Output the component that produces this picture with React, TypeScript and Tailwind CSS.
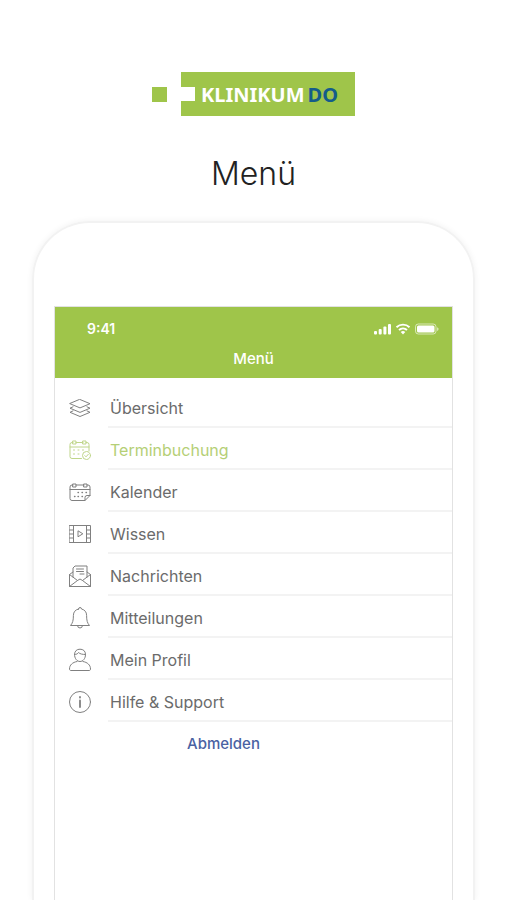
import type { ReactNode } from "react";

type Item = { label: string; icon: ReactNode; active?: boolean };

function Icon({ children }: { children: ReactNode }) {
  return (
    <svg
      viewBox="0 0 24 24"
      className="size-6 shrink-0 opacity-85"
      fill="none"
      stroke="currentColor"
      strokeWidth="1"
      strokeLinecap="round"
      strokeLinejoin="round"
      aria-hidden="true"
    >
      {children}
    </svg>
  );
}

const items: Item[] = [
  {
    label: "Übersicht",
    icon: (
      <Icon>
        <path d="M12 3.500 22 7.700 12 11.900 2 7.700Z" />
        <path d="M5 10.800 2 12.200 12 16.400l10-4.200L19 10.800" />
        <path d="M5 14.900 2 16.300 12 20.500l10-4.200L19 14.900" />
      </Icon>
    ),
  },
  {
    label: "Terminbuchung",
    active: true,
    icon: (
      <Icon>
        <path d="M13.500 20.500H4a2 2 0 0 1-2-2V6.500a2 2 0 0 1 2-2h1M8 4.500h7M18 4.500h1a2 2 0 0 1 2 2V13M2 9h19" />
        <path d="M5 3h3v3H5zM15 3h3v3h-3z" />
        <path d="M5.500 12h1M10 12h1M14.500 12h1M5.500 16h1M10 16h1" />
        <circle cx="18.500" cy="17.500" r="4" />
        <path d="m16.800 17.600 1.200 1.200 2.300-2.500" />
      </Icon>
    ),
  },
  {
    label: "Kalender",
    icon: (
      <Icon>
        <path d="M5 5H4a2 2 0 0 0-2 2v11.500a2 2 0 0 0 2 2h13l5-5V7a2 2 0 0 0-2-2h-1M8 5h8M2 9.500h20" />
        <path d="M5 4h3v3H5zM16 4h3v3h-3z" />
        <path d="M17 20.500v-3a2 2 0 0 1 2-2h3" />
        <path d="M10 12.500h.500M14 12.500h.500M18 12.500h.500M6.500 16.500h.500M10 16.500h.500M14 16.500h.500" strokeWidth="1.300" />
      </Icon>
    ),
  },
  {
    label: "Wissen",
    icon: (
      <Icon>
        <path d="M1.500 3.500h21v17h-21zM5.500 3.500v17M18.500 3.500v17" />
        <path d="M1.500 8h4M1.500 12h4M1.500 16h4M18.500 8h4M18.500 12h4M18.500 16h4" />
        <path d="M10 9.200v5.600l4.500-2.800Z" />
      </Icon>
    ),
  },
  {
    label: "Nachrichten",
    icon: (
      <Icon>
        <path d="M5 8 1.500 10.500v12h21v-12L19 8" />
        <path d="M5 13V4l2-2h12v11" />
        <path d="m1.500 10.500 8 6M22.500 10.500l-8 6M1.500 22.500l8-6L12 15l2.500 1.500 8 6" />
        <path d="M8.500 5h7M8.500 7.500h7M12 10h4" />
      </Icon>
    ),
  },
  {
    label: "Mitteilungen",
    icon: (
      <Icon>
        <path d="M10.500 3a1.500 1.500 0 0 1 3 0c3.300.800 5.100 3 5.100 6.500 0 5 .700 7.500 2.900 10h-19c2.200-2.500 2.900-5 2.900-10 0-3.500 1.800-5.700 5.100-6.500Z" />
        <path d="M9.500 19.500a2.500 2.500 0 0 0 5 0" />
      </Icon>
    ),
  },
  {
    label: "Mein Profil",
    icon: (
      <Icon>
        <path d="M6.500 6.500C6.500 3 8.800 1.200 12 1.200s5.500 1.800 5.500 5.300c0 4-2.500 7-5.500 7s-5.500-3-5.500-7Z" />
        <path d="M6.500 6.500c2 0 3.200-.700 4-2 1.500 1.500 4 2 7 2" />
        <path d="M9 13.500c-4.500.800-7.500 3.500-7.500 7.500 0 1 .500 1.500 1.500 1.500h18c1 0 1.500-.500 1.500-1.500 0-4-3-6.700-7.500-7.500" />
      </Icon>
    ),
  },
  {
    label: "Hilfe & Support",
    icon: (
      <Icon>
        <circle cx="12" cy="12" r="10.500" />
        <path d="M12 10.500v6.500M12 7v.500" strokeWidth="1.800" />
      </Icon>
    ),
  },
];

function Logo() {
  return (
    <div className="flex items-center gap-3.5" role="img" aria-label="Klinikum Do">
      <span className="size-[15px] bg-[#9fc54a]" />
      <div className="flex h-11 w-[174px] items-center bg-[#9fc54a]">
        <span className="mr-1.5 h-3.5 w-3.5 bg-white" />
        <span className="pt-0.5 font-['Noto_Sans',sans-serif] text-xl leading-6 font-bold text-white">KLINIKUM</span>
        <span className="ml-[3px] pt-0.5 font-['Noto_Sans',sans-serif] text-xl leading-6 font-bold text-[#145c8a]">DO</span>
      </div>
    </div>
  );
}

function StatusIcons() {
  return (
    <svg viewBox="0 0 66 12" className="h-3 w-[66px]" fill="currentColor" aria-hidden="true">
      <rect x="0" y="8" width="3" height="3.500" rx="1" />
      <rect x="4.700" y="6" width="3" height="5.500" rx="1" />
      <rect x="9.400" y="3.500" width="3" height="8" rx="1" />
      <rect x="14" y="1" width="3" height="10.500" rx="1" />
      <g fill="none" stroke="currentColor" strokeWidth="1.900">
        <path d="M22.500 4.200a9.500 9.500 0 0 1 13 0" />
        <path d="M25 7a6 6 0 0 1 8 0" />
      </g>
      <path d="M26.700 9a3.500 3.500 0 0 1 4.600 0L29 11.500Z" />
      <rect x="41.500" y="1" width="20.500" height="10" rx="2.800" fill="none" stroke="currentColor" strokeOpacity="0.600" />
      <rect x="43" y="2.500" width="17.500" height="7" rx="1.500" />
      <path d="M63.200 4.200c1.800.700 1.800 3 0 3.700Z" opacity="0.700" />
    </svg>
  );
}

export default function App() {
  return (
    <main className="flex min-h-screen flex-col overflow-hidden bg-white font-['Inter','Liberation_Sans',sans-serif]">
      <header className="flex flex-col items-center pt-[72px]">
        <Logo />
        <h1 className="mt-[38px] text-[32px] leading-10 font-light text-[#222222]">Menü</h1>
      </header>

      <section className="mx-8 mt-[27px] flex flex-1 flex-col rounded-t-[58px] border-2 border-b-0 border-[#f2f2f2] px-5 pt-[83px] shadow-[0_0_6px_rgba(0,0,0,0.06)]">
        <div className="flex flex-1 flex-col border-x border-t border-[#e2e2e2]">
          <div className="bg-[#9fc54a] pt-3 pb-[7px] text-white">
            <div className="flex h-5 items-center justify-between pr-3 pl-8">
              <span className="text-sm leading-5 font-semibold">9:41</span>
              <StatusIcons />
            </div>
            <h2 className="mt-2 text-center text-[15px] leading-6 font-medium">Menü</h2>
          </div>

          <nav className="pt-2">
            <ul>
              {items.map((item) => (
                <li key={item.label}>
                  <a
                    href="#"
                    className={
                      item.active
                        ? "flex items-center gap-4 pt-0.5 pl-[13px] text-[#b5cf76]"
                        : "flex items-center gap-4 pt-0.5 pl-[13px] text-[#6b6b6b]"
                    }
                  >
                    {item.icon}
                    <span className="flex h-10 flex-1 items-center border-b-2 border-[#f3f3f3] pt-0.5 pl-0.5 text-base leading-6">
                      {item.label}
                    </span>
                  </a>
                </li>
              ))}
            </ul>
          </nav>

          <button type="button" className="mr-[60px] mt-2.5 self-center text-[15px] leading-6 font-medium text-[#4a62a3]">
            Abmelden
          </button>
        </div>
      </section>
    </main>
  );
}
